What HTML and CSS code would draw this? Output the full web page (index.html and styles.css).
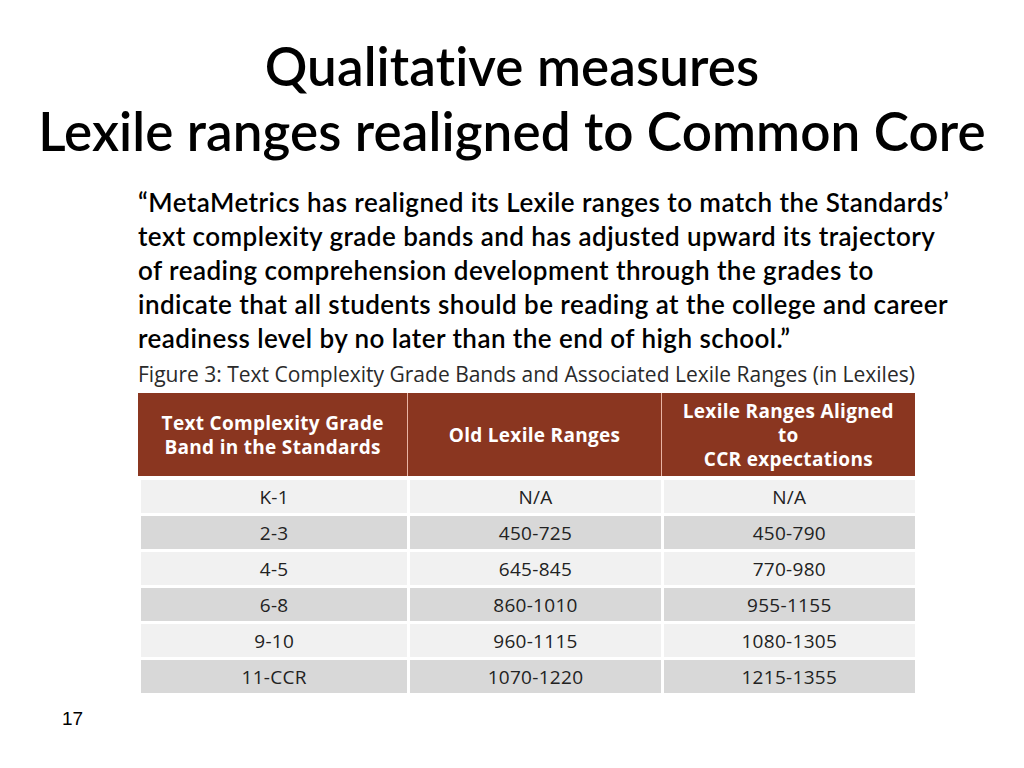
FILE: index.html
```html
<!DOCTYPE html>
<html>
<head>
<meta charset="utf-8">
<link rel="stylesheet" href="styles.css">
</head>
<body>
<div class="slide">
  <h1 class="title">Qualitative measures<br>Lexile ranges realigned to Common Core</h1>
  <div class="content">
    <p class="quote">“MetaMetrics has realigned its Lexile ranges to match the Standards’<br>text complexity grade bands and has adjusted upward its trajectory<br>of reading comprehension development through the grades to<br>indicate that all students should be reading at the college and career<br>readiness level by no later than the end of high school.”</p>
    <div class="figure">
      <div class="caption">Figure 3: Text Complexity Grade Bands and Associated Lexile Ranges (in Lexiles)</div>
      <table class="lexile">
        <thead>
          <tr>
            <th class="c1">Text Complexity Grade<br>Band in the Standards</th>
            <th class="c2">Old Lexile Ranges</th>
            <th class="c3">Lexile Ranges Aligned<br>to<br>CCR expectations</th>
          </tr>
        </thead>
        <tbody>
          <tr class="light"><td>K-1</td><td>N/A</td><td>N/A</td></tr>
          <tr class="dark"><td>2-3</td><td>450-725</td><td>450-790</td></tr>
          <tr class="light"><td>4-5</td><td>645-845</td><td>770-980</td></tr>
          <tr class="dark"><td>6-8</td><td>860-1010</td><td>955-1155</td></tr>
          <tr class="light"><td>9-10</td><td>960-1115</td><td>1080-1305</td></tr>
          <tr class="dark"><td>11-CCR</td><td>1070-1220</td><td>1215-1355</td></tr>
        </tbody>
      </table>
    </div>
  </div>
  <div class="pagenum">17</div>
</div>
</body>
</html>
```

FILE: styles.css
```css
html, body {
  margin: 0;
  padding: 0;
  background: #ffffff;
}
.slide {
  width: 1024px;
  height: 768px;
  position: relative;
  overflow: hidden;
  font-family: "Lato", sans-serif;
  color: #000;
  font-variant-ligatures: none;
}
.title {
  margin: 0;
  padding-top: 33px;
  text-align: center;
  font-family: "Lato", sans-serif;
  font-weight: 600;
  font-size: 53px;
  line-height: 65px;
  letter-spacing: 0.1px;
  white-space: nowrap;
}
.content {
  padding-left: 138px;
  padding-top: 22px;
}
.quote {
  margin: 0;
  font-family: "Lato", sans-serif;
  font-weight: 600;
  font-size: 26px;
  line-height: 34px;
  letter-spacing: 0.45px;
  white-space: nowrap;
}
.figure {
  margin-top: 6px;
  width: 780px;
}
.caption {
  font-family: "Open Sans", sans-serif;
  font-size: 21px;
  line-height: 26px;
  color: #2a2a2a;
  margin-bottom: 6px;
  white-space: nowrap;
  letter-spacing: 0;
}
.lexile {
  border-collapse: separate;
  border-spacing: 0;
  width: 777px;
  font-family: "Open Sans", sans-serif;
  text-align: center;
}
.lexile th {
  background: #8a3620;
  color: #fff;
  font-weight: bold;
  font-size: 19px;
  line-height: 24px;
  letter-spacing: 0.3px;
  height: 83px;
  padding: 0;
  border-left: 1px solid #e9b4a4;
}
.lexile th.c1 { width: 269px; border-left: none; }
.lexile th.c2 { width: 252px; }
.lexile th.c3 { width: 253px; }
.lexile tbody tr:first-child td { border-top: 4px solid #fff; }
.lexile td {
  height: 33px;
  padding: 0;
  font-size: 19px;
  letter-spacing: 0.3px;
  color: #222;
  border-left: 3px solid #fff;
  border-bottom: 3px solid #fff;
}
.lexile tr.light td { background: #f1f1f1; }
.lexile tr.dark td { background: #d8d8d8; }
.pagenum {
  position: absolute;
  left: 62px;
  top: 708px;
  font-family: "Liberation Sans", sans-serif;
  font-size: 19px;
}
```
